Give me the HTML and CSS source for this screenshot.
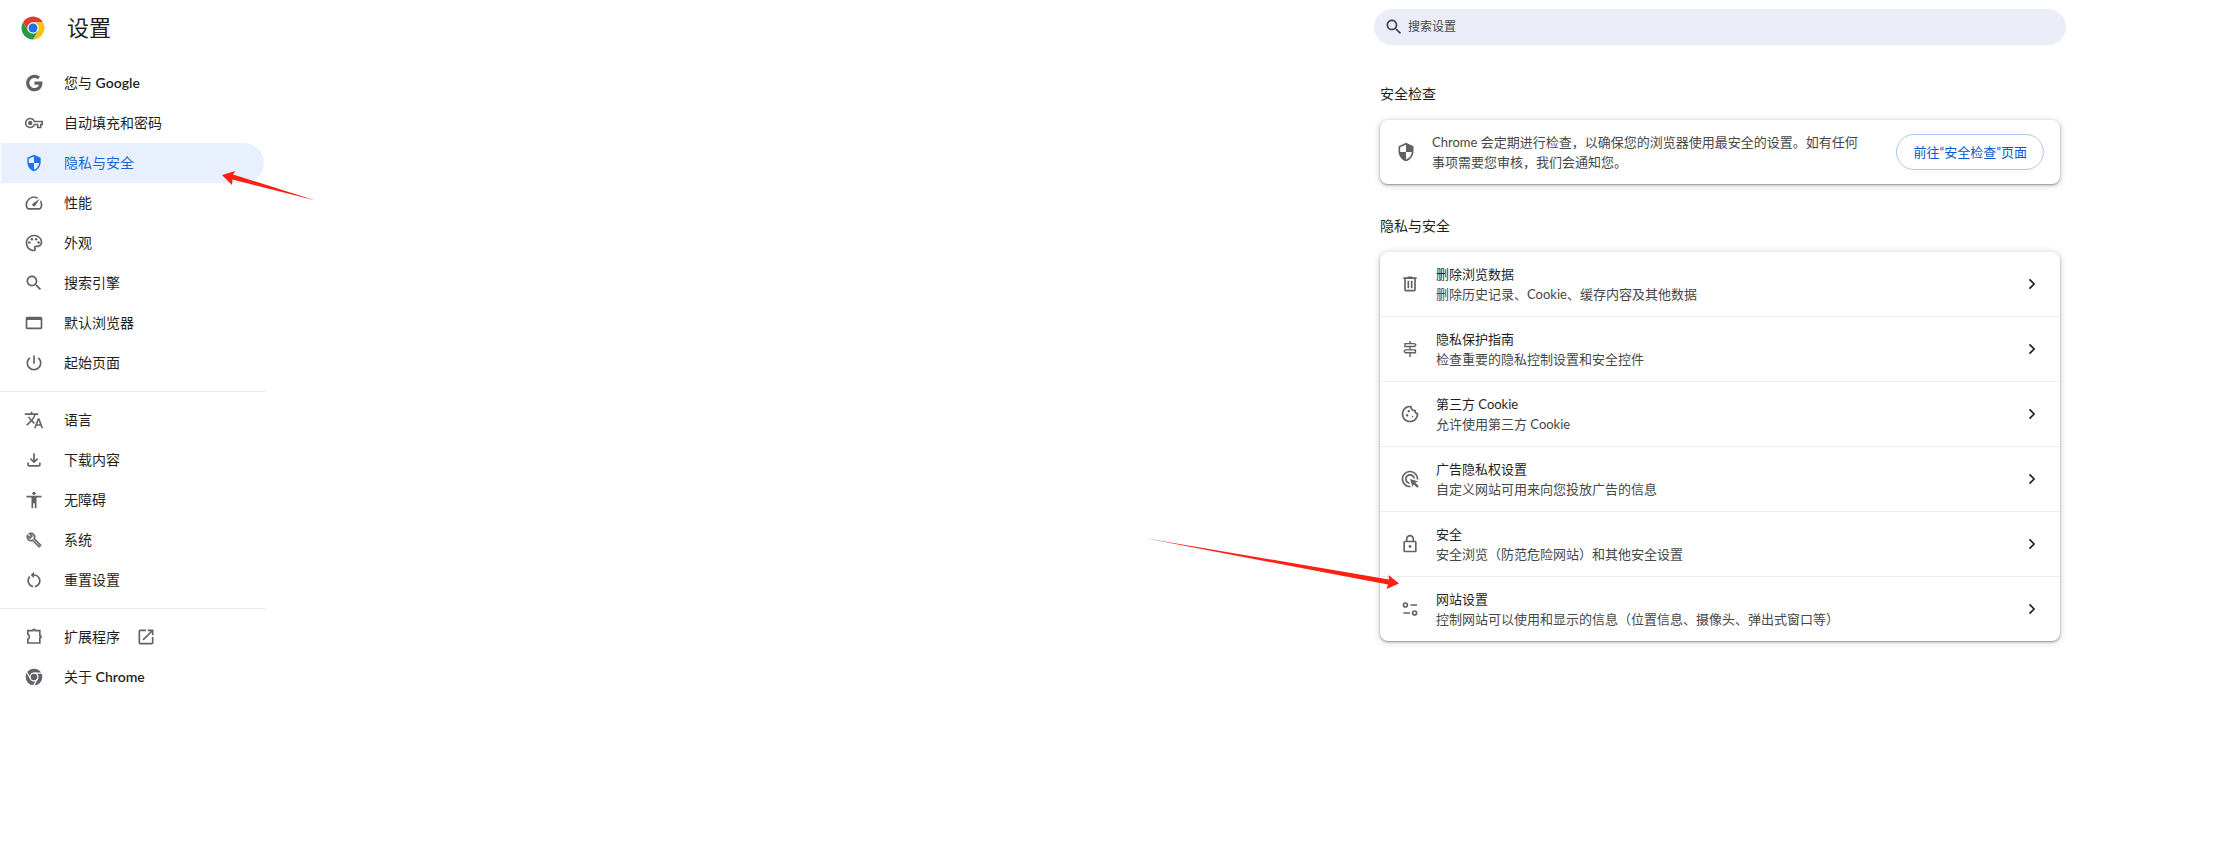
FILE: index.html
```html
<!DOCTYPE html>
<html lang="zh-CN">
<head>
  <meta charset="UTF-8">
  <title>设置</title>
  <link rel="stylesheet" href="styles.css">
</head>
<body>

  <div class="sidebar">
    <header class="brand">
      <svg class="logo" viewBox="-12.5 -12.5 25 25">
        <path fill="#e33b2e" d="M-10.39-6A12 12 0 0 1 10.39-6L0-6-5.2 3z"/>
        <path fill="#fbc116" d="M10.39-6A12 12 0 0 1 0 12L5.2 3 0-6z"/>
        <path fill="#249a41" d="M0 12A12 12 0 0 1-10.39-6L-5.2 3 5.2 3z"/>
        <circle r="6" fill="#fff"/>
        <circle r="4.7" fill="#1a73e8"/>
      </svg>
      <h1>设置</h1>
    </header>

    <nav class="menu">
      <a href="#people">
        <svg class="icon" viewBox="0 0 24 24"><path d="M12.545 10.239v3.821h5.445c-.712 2.315-2.647 3.972-5.445 3.972-3.332 0-6.033-2.701-6.033-6.032s2.701-6.032 6.033-6.032c1.498 0 2.866.549 3.921 1.453l2.814-2.814C17.503 2.988 15.139 2 12.545 2 7.021 2 2.543 6.477 2.543 12s4.478 10 10.002 10c8.396 0 10.249-7.85 9.426-11.748z"/></svg>
        <span>您与 <b>Google</b></span>
      </a>
      <a href="#autofill">
        <svg class="icon" viewBox="-1.3 -1.3 26.6 26.6"><path d="M22 19h-6v-4h-2.68c-1.14 2.42-3.6 4-6.32 4-3.86 0-7-3.14-7-7s3.14-7 7-7c2.72 0 5.17 1.58 6.32 4H24v6h-2v4zm-4-2h2v-4h2v-2H11.94l-.23-.67C11.01 8.34 9.11 7 7 7c-2.76 0-5 2.24-5 5s2.24 5 5 5c2.11 0 4.01-1.34 4.71-3.33l.23-.67H18v4zM7 15c-1.65 0-3-1.35-3-3s1.35-3 3-3 3 1.35 3 3-1.35 3-3 3z"/></svg>
        自动填充和密码
      </a>
      <a href="#privacy" class="selected" aria-current="page">
        <svg class="icon" viewBox="-1.5 -1.5 27 27"><path d="M12 1L3 5v6c0 5.55 3.84 10.74 9 12 5.16-1.26 9-6.45 9-12V5l-9-4zm0 10.99h7c-.53 4.12-3.28 7.79-7 8.94V12H5V6.3l7-3.11v8.8z"/></svg>
        隐私与安全
        <svg class="arrow arrow-menu" viewBox="0 0 94 32"><path d="M0 5L13.500 1 11 4.500 93.500 30.500 10.500 9.500 10 15z"/></svg>
      </a>
      <a href="#performance">
        <svg class="icon" viewBox="0 0 24 24"><path d="M20.38 8.57l-1.23 1.85a8 8 0 0 1-.22 7.58H5.07A8 8 0 0 1 15.58 6.85l1.85-1.23A10 10 0 0 0 3.35 19a2 2 0 0 0 1.72 1h13.85a2 2 0 0 0 1.74-1 10 10 0 0 0-.27-10.44zm-9.79 6.84a2 2 0 0 0 2.83 0l5.66-8.49-8.49 5.66a2 2 0 0 0 0 2.83z"/></svg>
        性能
      </a>
      <a href="#appearance">
        <svg class="icon" viewBox="0 0 24 24"><path d="M12 22C6.490 22 2 17.510 2 12S6.490 2 12 2s10 4.040 10 9c0 3.310-2.690 6-6 6h-1.770c-.28 0-.5.22-.5.5 0 .12.05.23.13.33.41.47.64 1.060.64 1.670 0 1.380-1.120 2.500-2.500 2.500zm0-18c-4.410 0-8 3.590-8 8s3.590 8 8 8c.28 0 .5-.22.5-.5 0-.16-.08-.28-.14-.35-.41-.46-.63-1.050-.63-1.650 0-1.380 1.120-2.500 2.500-2.500H16c2.210 0 4-1.790 4-4 0-3.860-3.590-7-8-7z"/><circle cx="6.500" cy="11.500" r="1.500"/><circle cx="9.500" cy="7.500" r="1.500"/><circle cx="14.500" cy="7.500" r="1.500"/><circle cx="17.500" cy="11.500" r="1.500"/></svg>
        外观
      </a>
      <a href="#search">
        <svg class="icon" viewBox="0 0 24 24"><path d="M15.500 14h-.79l-.28-.27C15.410 12.590 16 11.110 16 9.500 16 5.910 13.090 3 9.500 3S3 5.910 3 9.500 5.910 16 9.500 16c1.610 0 3.090-.59 4.230-1.570l.27.28v.79l5 4.990L20.490 19l-4.990-5zm-6 0C7.010 14 5 11.990 5 9.500S7.010 5 9.500 5 14 7.010 14 9.500 11.990 14 9.500 14z"/></svg>
        搜索引擎
      </a>
      <a href="#browser">
        <svg class="icon" viewBox="0 0 24 24"><path d="M20 4.500H4c-1.100 0-2 .9-2 2v11c0 1.100.9 2 2 2h16c1.100 0 2-.9 2-2v-11c0-1.100-.9-2-2-2zm0 13H4v-9h16v9z"/></svg>
        默认浏览器
      </a>
      <a href="#startup">
        <svg class="icon" viewBox="0 0 24 24"><path d="M13 3h-2v10h2V3zm4.830 2.170l-1.420 1.420C17.990 7.860 19 9.810 19 12c0 3.870-3.130 7-7 7s-7-3.130-7-7c0-2.190 1.010-4.140 2.580-5.420L6.170 5.170C4.230 6.820 3 9.260 3 12c0 4.970 4.030 9 9 9s9-4.030 9-9c0-2.740-1.230-5.180-3.170-6.830z"/></svg>
        起始页面
      </a>
      <hr>
      <a href="#languages">
        <svg class="icon" viewBox="0 0 24 24"><path d="M12.870 15.070l-2.540-2.510.03-.03c1.740-1.940 2.980-4.170 3.710-6.530H17V4h-7V2H8v2H1v1.990h11.170C11.500 7.920 10.440 9.750 9 11.350 8.070 10.320 7.300 9.190 6.690 8h-2c.73 1.630 1.730 3.170 2.980 4.560l-5.090 5.020L4 19l5-5 3.110 3.110.76-2.040zM18.500 10h-2L12 22h2l1.120-3h4.750L21 22h2l-4.500-12zm-2.620 7l1.620-4.330L19.120 17h-3.240z"/></svg>
        语言
      </a>
      <a href="#downloads">
        <svg class="icon" viewBox="0 0 24 24"><path d="M18 15v3H6v-3H4v3c0 1.100.9 2 2 2h12c1.100 0 2-.9 2-2v-3h-2zm-1-4l-1.410-1.410L13 12.170V4h-2v8.170L8.410 9.590 7 11l5 5 5-5z"/></svg>
        下载内容
      </a>
      <a href="#accessibility">
        <svg class="icon" viewBox="0 0 24 24"><path d="M21 9h-6v13h-2v-6h-2v6H9V9H3V7h18z"/><circle cx="12" cy="4" r="2"/></svg>
        无障碍
      </a>
      <a href="#system">
        <svg class="icon wrench" viewBox="-3 -3 30 30"><path d="M22.610 18.990l-9.080-9.080c.93-2.340.45-5.100-1.440-7C9.790.61 6.210.4 3.660 2.260L7.500 6.110 6.080 7.520 2.250 3.690C.39 6.230.6 9.820 2.900 12.110c1.860 1.860 4.570 2.350 6.890 1.480l9.110 9.110c.39.39 1.020.39 1.410 0l2.300-2.300c.4-.38.4-1.010 0-1.410zm-3 1.600l-9.460-9.460c-.61.45-1.290.72-2 .82-1.360.2-2.790-.21-3.830-1.250C3.370 9.760 2.930 8.500 3 7.260l3.090 3.090 4.240-4.240-3.090-3.090c1.240-.07 2.490.37 3.440 1.310 1.080 1.080 1.490 2.570 1.240 3.960-.12.71-.42 1.370-.88 1.960l9.450 9.450-.88.89z"/></svg>
        系统
      </a>
      <a href="#reset">
        <svg class="icon" viewBox="0 0 24 24"><path d="M12 5V2L8 6l4 4V7c3.310 0 6 2.690 6 6 0 2.970-2.170 5.430-5 5.910v2.020c3.950-.49 7-3.850 7-7.930 0-4.420-3.580-8-8-8zm-6 8c0-1.650.67-3.150 1.760-4.240L6.340 7.340C4.900 8.790 4 10.790 4 13c0 4.080 3.050 7.440 7 7.930v-2.020c-2.830-.48-5-2.940-5-5.910z"/></svg>
        重置设置
      </a>
      <hr>
      <a href="#extensions">
        <svg class="icon line" viewBox="0 0 24 24"><path d="M4.600 4.400H10.500a1.500 1.500 0 0 1 3 0H19V10.300a1.500 1.500 0 0 1 0 3V19.200H4.600v-4.400c2.400-1 2.400-5 0-6z"/></svg>
        扩展程序
        <svg class="icon" viewBox="0 0 24 24"><path d="M19 19H5V5h7V3H5c-1.110 0-2 .9-2 2v14c0 1.100.89 2 2 2h14c1.100 0 2-.9 2-2v-7h-2v7zM14 3v2h3.590l-9.830 9.830 1.410 1.410L19 6.410V10h2V3h-7z"/></svg>
      </a>
      <a href="#about">
        <svg class="icon" viewBox="-12 -12 24 24">
          <circle r="10"/>
          <g fill="none" stroke="#fff" stroke-width="1.500">
            <circle r="4.700"/>
            <path d="M0-4.700H10M4.070 2.350L-.93 11M-4.070 2.350L-9.070-6.300"/>
          </g>
        </svg>
        <span>关于 <b>Chrome</b></span>
      </a>
    </nav>
  </div>

  <main class="content">
    <form class="search">
      <svg class="icon" viewBox="0 0 24 24"><path d="M15.500 14h-.79l-.28-.27C15.410 12.590 16 11.110 16 9.500 16 5.910 13.090 3 9.500 3S3 5.910 3 9.500 5.910 16 9.500 16c1.610 0 3.090-.59 4.230-1.570l.27.28v.79l5 4.990L20.490 19l-4.990-5zm-6 0C7.010 14 5 11.990 5 9.500S7.010 5 9.500 5 14 7.010 14 9.500 11.990 14 9.500 14z"/></svg>
      <input type="search" placeholder="搜索设置" aria-label="搜索设置">
    </form>

    <section>
      <h2>安全检查</h2>
      <div class="card safety">
        <svg class="icon" viewBox="0 0 24 24"><path d="M12 1L3 5v6c0 5.550 3.840 10.740 9 12 5.160-1.260 9-6.450 9-12V5l-9-4zm0 10.990h7c-.53 4.120-3.280 7.790-7 8.940V12H5V6.300l7-3.110v8.800z"/></svg>
        <p>Chrome 会定期进行检查，以确保您的浏览器使用最安全的设置。如有任何事项需要您审核，我们会通知您。</p>
        <button type="button">前往“安全检查”页面</button>
      </div>
    </section>

    <section>
      <h2>隐私与安全</h2>
      <div class="card">
        <a class="row" href="#clear-data">
          <svg class="icon" viewBox="0 -960 960 960"><path d="M280-120q-33 0-56.500-23.500T200-200v-520h-40v-80h200v-40h240v40h200v80h-40v520q0 33-23.500 56.500T680-120H280Zm400-600H280v520h400v-520ZM360-280h80v-360h-80v360Zm160 0h80v-360h-80v360Z"/></svg>
          <span class="label"><b>删除浏览数据</b><small>删除历史记录、Cookie、缓存内容及其他数据</small></span>
          <svg class="icon chevron" viewBox="0 0 24 24"><path d="M9 6.500l5.500 5.500L9 17.500"/></svg>
        </a>
        <a class="row" href="#guide">
          <svg class="icon line signpost" viewBox="0 0 24 24"><path d="M12 2.500v3M12 9v4M12 16.500v5M6 5.500H17.500L19 7.200 17.500 9H6zM18.500 13H6.500L5 14.800 6.500 16.500H18.500z"/></svg>
          <span class="label"><b>隐私保护指南</b><small>检查重要的隐私控制设置和安全控件</small></span>
          <svg class="icon chevron" viewBox="0 0 24 24"><path d="M9 6.500l5.500 5.500L9 17.500"/></svg>
        </a>
        <a class="row" href="#cookies">
          <svg class="icon" viewBox="0 -960 960 960"><path d="M480-80q-83 0-156-31.500T197-197q-54-54-85.500-127T80-480q0-75 29-147t81-128.500q52-56.500 125-91T475-881q21 0 43 2t45 7q-9 45 6 85t45 66.500q30 26.500 71.500 36.500t85.500-5q-26 59 7.500 113t99.500 56q1 11 1.500 20.500t.5 20.500q0 82-31.500 154.500t-85.500 127q-54 54.500-127 86T480-80Zm-60-480q25 0 42.500-17.500T480-620q0-25-17.500-42.500T420-680q-25 0-42.500 17.500T360-620q0 25 17.500 42.500T420-560Zm-80 200q25 0 42.500-17.500T400-420q0-25-17.500-42.500T340-480q-25 0-42.500 17.500T280-420q0 25 17.500 42.500T340-360Zm260 40q17 0 28.500-11.500T640-360q0-17-11.500-28.500T600-400q-17 0-28.500 11.500T560-360q0 17 11.500 28.500T600-320ZM480-160q122 0 216.500-84T800-458q-50-22-78.500-60T683-603q-77-11-132-66t-68-132q-80-2-140.500 29t-101 79.500Q201-644 180.500-587T160-480q0 133 93.500 226.500T480-160Z"/></svg>
          <span class="label"><b>第三方 Cookie</b><small>允许使用第三方 Cookie</small></span>
          <svg class="icon chevron" viewBox="0 0 24 24"><path d="M9 6.500l5.500 5.500L9 17.500"/></svg>
        </a>
        <a class="row" href="#ads">
          <svg class="icon" viewBox="0 0 24 24"><path d="M11.710 17.990C8.530 17.840 6 15.220 6 12c0-3.310 2.690-6 6-6 3.220 0 5.840 2.530 5.990 5.710l-2.100-.63C15.480 9.310 13.890 8 12 8c-2.210 0-4 1.790-4 4 0 1.890 1.310 3.480 3.080 3.890zM22 12c0 .3-.01.6-.04.9l-1.970-.59C20 12.210 20 12.100 20 12c0-4.420-3.580-8-8-8s-8 3.580-8 8 3.580 8 8 8c.1 0 .21 0 .31-.01l.59 1.970C12.600 21.990 12.300 22 12 22 6.480 22 2 17.520 2 12S6.480 2 12 2s10 4.480 10 10zM18.230 16.260L22 15l-10-3 3 10 1.260-3.770 4.270 4.270 1.980-1.980z"/></svg>
          <span class="label"><b>广告隐私权设置</b><small>自定义网站可用来向您投放广告的信息</small></span>
          <svg class="icon chevron" viewBox="0 0 24 24"><path d="M9 6.500l5.500 5.500L9 17.500"/></svg>
        </a>
        <a class="row" href="#security">
          <svg class="icon" viewBox="0 0 24 24"><path d="M18 8h-1V6c0-2.760-2.240-5-5-5S7 3.240 7 6v2H6c-1.100 0-2 .9-2 2v10c0 1.100.9 2 2 2h12c1.100 0 2-.9 2-2V10c0-1.100-.9-2-2-2zM9 6c0-1.660 1.340-3 3-3s3 1.340 3 3v2H9V6zm9 14H6V10h12v10z"/><circle cx="12" cy="15" r="1.700"/></svg>
          <span class="label"><b>安全</b><small>安全浏览（防范危险网站）和其他安全设置</small></span>
          <svg class="icon chevron" viewBox="0 0 24 24"><path d="M9 6.500l5.500 5.500L9 17.500"/></svg>
        </a>
        <a class="row" href="#site-settings">
          <svg class="icon line" viewBox="0 0 24 24"><circle cx="6.500" cy="7.200" r="2.400"/><path d="M12.500 7.200h8M4 16.800h8"/><circle cx="17.500" cy="16.800" r="2.400"/></svg>
          <span class="label"><b>网站设置</b><small>控制网站可以使用和显示的信息（位置信息、摄像头、弹出式窗口等）</small></span>
          <svg class="icon chevron" viewBox="0 0 24 24"><path d="M9 6.500l5.500 5.500L9 17.500"/></svg>
          <svg class="arrow arrow-row" viewBox="0 0 256 52"><path d="M0 0L245 41.500 244.500 37 255 45.500 242.500 51 244 46.500z"/></svg>
        </a>
      </div>
    </section>
  </main>

</body>
</html>
```

FILE: styles.css
```css
body {
  display: flex;
  margin: 0;
  background: #fff;
  color: #1f1f1f;
  font-family: Lato, "Noto Sans CJK SC", sans-serif;
  font-size: 13px;
  line-height: 20px;
}
h1, h2, p {
  margin: 0;
  font-weight: normal;
}
a {
  color: inherit;
  text-decoration: none;
}
.icon {
  flex: none;
  width: 20px;
  height: 20px;
  fill: #5f6368;
}
.icon.line {
  fill: none;
  stroke: #5f6368;
  stroke-width: 2;
}
.icon.signpost {
  stroke-width: 1.7;
}
.icon.wrench {
  stroke: #5f6368;
  stroke-width: .6;
}

/* sidebar */
.sidebar {
  flex: none;
  width: 266px;
}
.brand {
  display: flex;
  align-items: center;
  gap: 22px;
  height: 55px;
  padding-left: 21px;
}
.logo {
  width: 24px;
  height: 24px;
}
h1 {
  font-size: 22px;
  line-height: 32px;
}
.menu {
  padding-top: 8px;
}
.menu a {
  position: relative;
  display: flex;
  align-items: center;
  gap: 16px;
  height: 40px;
  margin: 0 2px 0 1px;
  padding-left: 23px;
  border-radius: 0 20px 20px 0;
  font-size: 14px;
}
.menu b {
  font-weight: 600;
}
.menu a .icon:first-child {
  margin-right: 4px;
}
.menu .selected {
  background: #e8f0fe;
  color: #1967d2;
}
.selected .icon {
  fill: #1a73e8;
}
hr {
  height: 1px;
  margin: 8px 0;
  border: 0;
  background: #e8eaed;
}

/* main column */
.content {
  flex: 0 1 692px;
  margin-left: auto;
  margin-right: 174px;
  padding-top: 9px;
}
.search {
  display: flex;
  align-items: center;
  gap: 4px;
  height: 36px;
  margin-bottom: 39px;
  padding: 0 10px;
  border-radius: 18px;
  background: #ebeef8;
}
.search .icon {
  fill: #474747;
}
.search input {
  flex: 1;
  padding: 0;
  border: 0;
  outline: 0;
  background: none;
  color: #474747;
  font: inherit;
  font-size: 12px;
}
.search input::placeholder {
  color: #474747;
}
section {
  margin: 0 6px 32px;
}
h2 {
  margin-bottom: 16px;
  font-size: 14px;
}
.card {
  border-radius: 8px;
  background: #fff;
  box-shadow: 0 1px 2px rgba(60, 64, 67, .5), 0 1px 6px 1px rgba(60, 64, 67, .2);
}
.safety {
  display: flex;
  align-items: center;
  gap: 16px;
  padding: 12px 16px;
  color: #474747;
}
.safety p {
  flex: 1;
  margin-right: 16px;
}
.safety button {
  height: 36px;
  padding: 0 16px;
  border: 1px solid #a8c7fa;
  border-radius: 18px;
  background: #fff;
  color: #0b57d0;
  font: inherit;
  cursor: pointer;
}
.row {
  position: relative;
  display: flex;
  align-items: center;
  gap: 16px;
  padding: 12px 18px 12px 20px;
}
.row + .row {
  border-top: 1px solid #ededed;
}
.label {
  flex: 1;
}
.label b, .label small {
  display: block;
  font-size: 13px;
  font-weight: normal;
}
.label small {
  color: #474747;
}
.icon.chevron {
  fill: none;
  stroke: #1f1f1f;
  stroke-width: 2;
}

/* red pointers drawn over the page */
.arrow {
  position: absolute;
  z-index: 1;
  fill: #ff2012;
  pointer-events: none;
}
.arrow-menu {
  left: 221px;
  top: 27px;
  width: 94px;
  height: 32px;
}
.arrow-row {
  left: -236px;
  top: -39px;
  width: 256px;
  height: 52px;
}
```
